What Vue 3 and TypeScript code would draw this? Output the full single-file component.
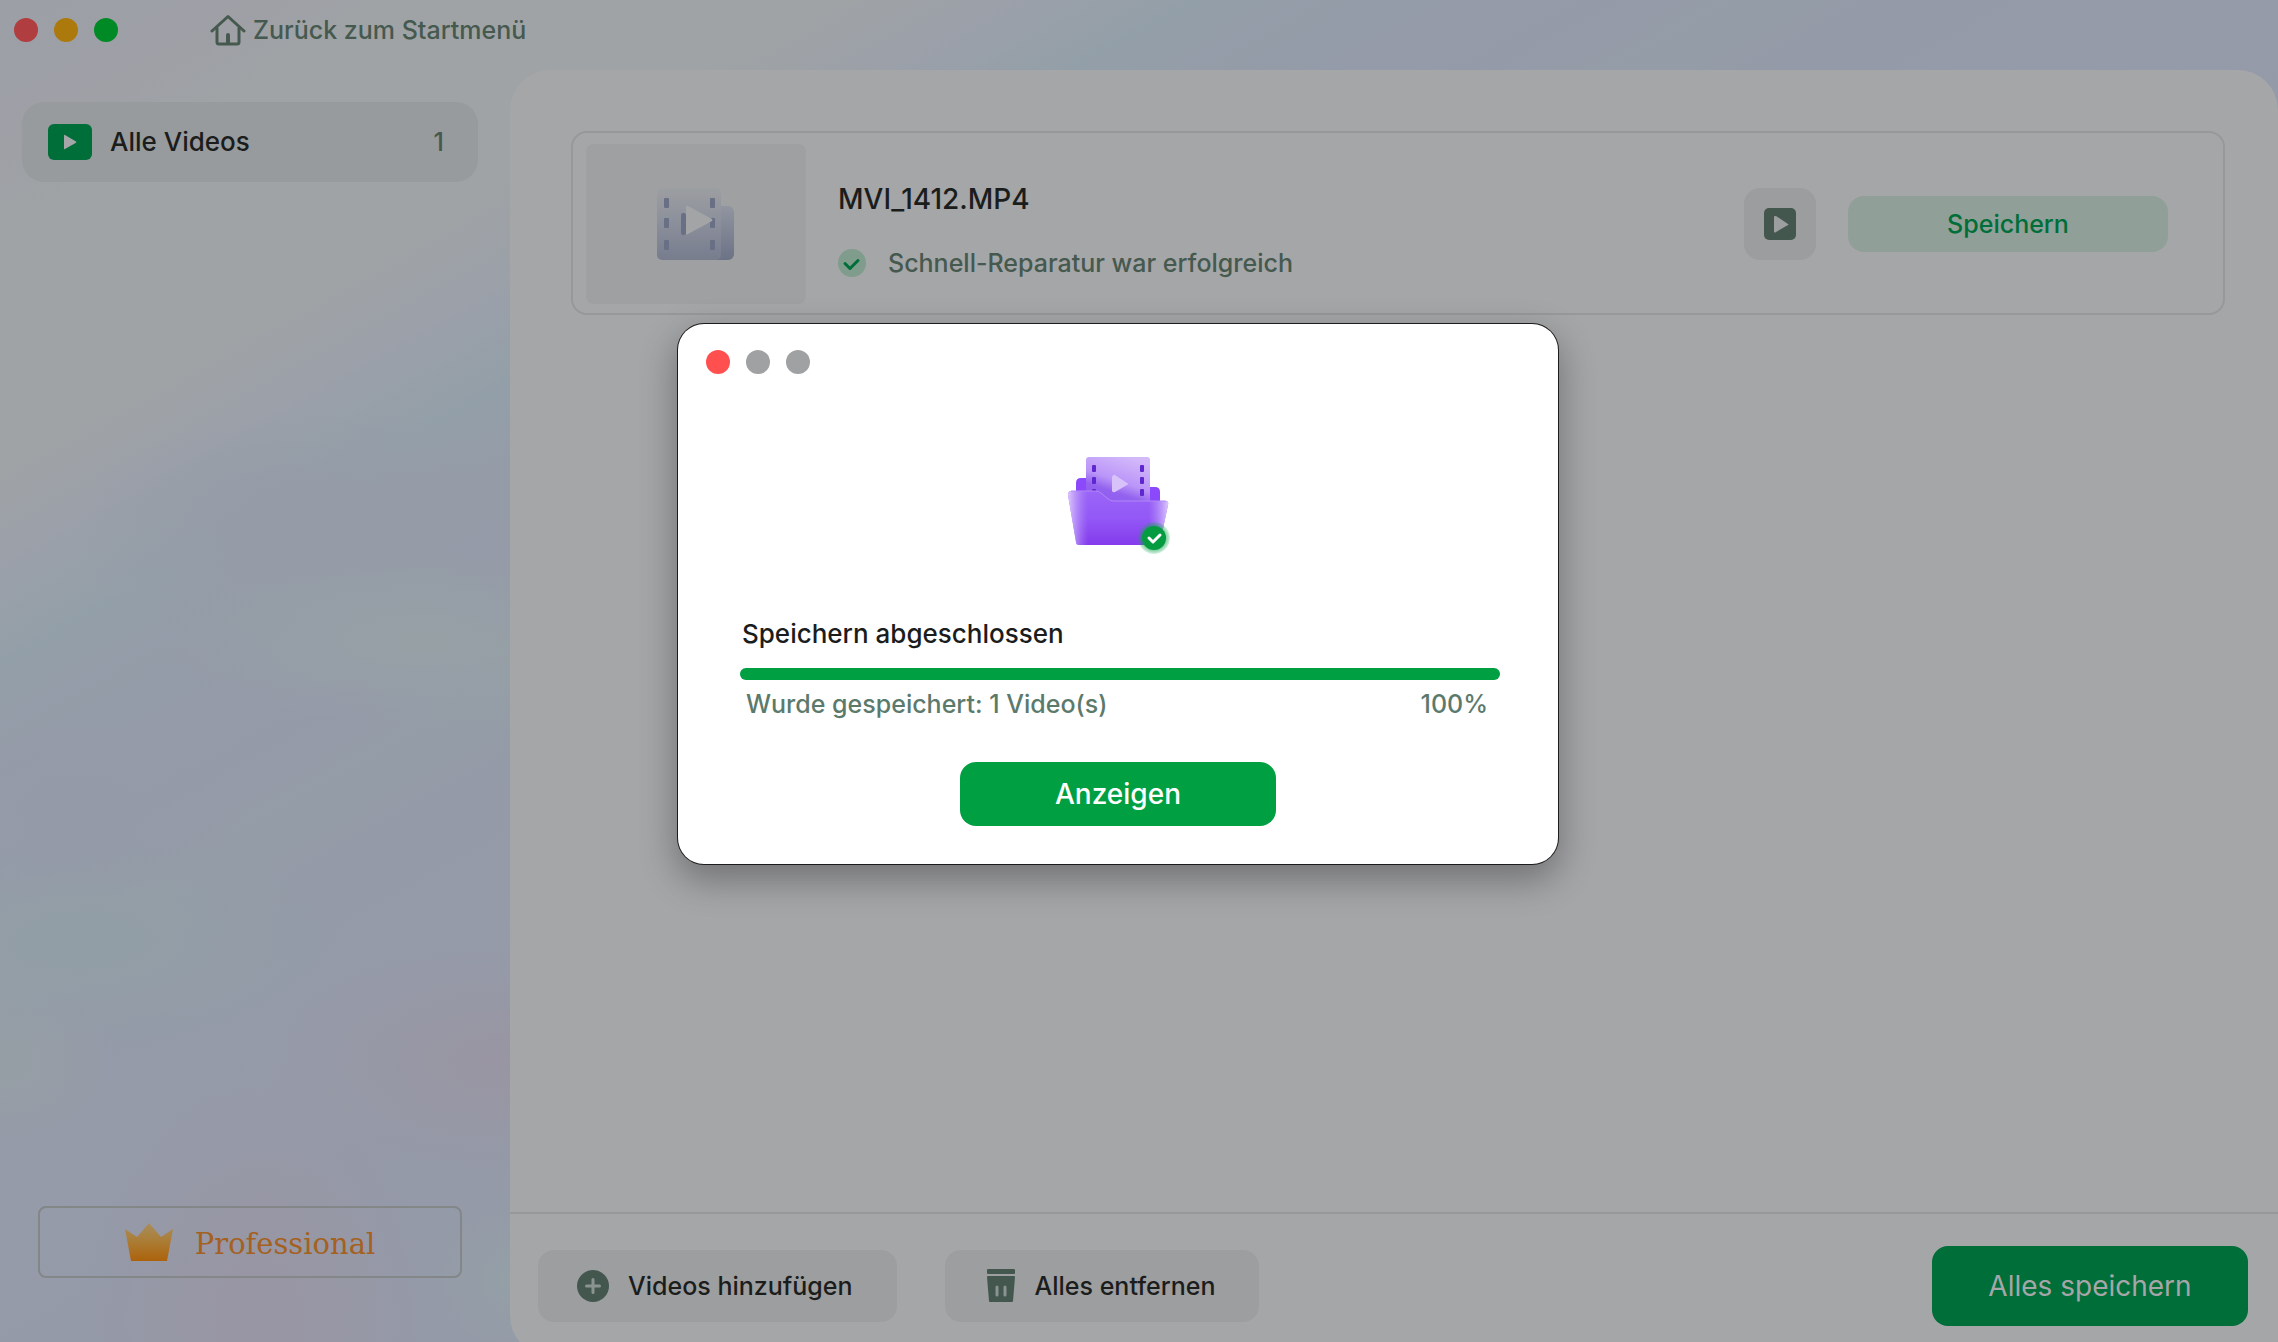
<script setup lang="ts">
import { computed, ref } from 'vue'

interface VideoFile {
  name: string
  status: string
}

const videos = ref<VideoFile[]>([
  { name: 'MVI_1412.MP4', status: 'Schnell-Reparatur war erfolgreich' },
])
const count = computed(() => videos.value.length)
const progress = ref(100)
</script>

<template>
  <div class="window">
    <header class="titlebar">
      <div class="lights">
        <button class="light red" aria-label="Schließen"></button>
        <button class="light amber" aria-label="Minimieren"></button>
        <button class="light green" aria-label="Vergrößern"></button>
      </div>
      <a class="home" href="#">
        <svg width="36" height="32" viewBox="0 0 36 32" fill="none" stroke="#46594f" stroke-width="3" stroke-linejoin="round" stroke-linecap="round">
          <path d="M2 17 18 2.500 34 17" />
          <path d="M7 14v14q0 2 2 2h18q2 0 2-2V14" />
          <path d="M18 21v8" stroke-width="4" />
        </svg>
        <span>Zurück zum Startmenü</span>
      </a>
    </header>

    <div class="body">
      <aside class="sidebar">
        <nav>
          <a class="category" href="#">
            <svg width="44" height="36" viewBox="0 0 44 36">
              <rect width="44" height="36" rx="6" fill="#006e38" />
              <path d="M16 11.500v13q0 1 1 .5l11-6.200q.8-.6 0-1.200l-11-6.600q-1-.5-1 .5z" fill="#a5a6a8" />
            </svg>
            <span class="category-name">Alle Videos</span>
            <span class="category-count">{{ count }}</span>
          </a>
        </nav>
        <button class="pro">
          <svg width="48" height="38" viewBox="0 0 48 38">
            <defs>
              <linearGradient id="crown" x1="0" y1="0" x2="0" y2="1">
                <stop offset="0" stop-color="#a88e5c" />
                <stop offset=".5" stop-color="#ab7c34" />
                <stop offset="1" stop-color="#ad620b" />
              </linearGradient>
            </defs>
            <path d="M0 6 12 14 24 0l12 14L48 6l-6 32H6z" fill="url(#crown)" />
          </svg>
          <span>Professional</span>
        </button>
      </aside>

      <main class="panel">
        <section class="files">
          <article v-for="video in videos" :key="video.name" class="file">
            <div class="thumb">
              <svg width="78" height="72" viewBox="0 0 78 72">
                <defs>
                  <linearGradient id="film" x1="0" y1="0" x2="0" y2="1">
                    <stop offset="0" stop-color="#9c9ea1" />
                    <stop offset=".5" stop-color="#8b8f9b" />
                    <stop offset="1" stop-color="#777d8e" />
                  </linearGradient>
                  <linearGradient id="filmback" x1="0" y1="0" x2="0" y2="1">
                    <stop offset="0" stop-color="#9195a0" />
                    <stop offset="1" stop-color="#6c7386" />
                  </linearGradient>
                </defs>
                <rect x="30" y="18" width="47" height="54" rx="6" fill="url(#filmback)" />
                <rect width="64" height="72" rx="5" fill="url(#film)" />
                <g fill="#697085">
                  <rect x="7" y="10" width="5" height="10" rx="1" />
                  <rect x="7" y="30" width="5" height="10" rx="1" />
                  <rect x="7" y="52" width="5" height="10" rx="1" />
                  <rect x="53" y="10" width="5" height="10" rx="1" />
                  <rect x="53" y="30" width="5" height="10" rx="1" />
                  <rect x="53" y="52" width="5" height="10" rx="1" />
                  <rect x="24" y="25" width="5" height="22" rx="2" />
                </g>
                <path d="M29 18v28q1 1 2 0l24-13q1-1 0-2L31 18q-1-1-2 0z" fill="#a3a4a6" />
              </svg>
            </div>
            <div class="info">
              <h2>{{ video.name }}</h2>
              <p>
                <svg width="28" height="28" viewBox="0 0 28 28">
                  <circle cx="14" cy="14" r="14" fill="#7f9c8d" />
                  <path d="M7 14.500l5 5 8-8" fill="none" stroke="#006e38" stroke-width="3" stroke-linecap="round" stroke-linejoin="round" />
                </svg>
                <span>{{ video.status }}</span>
              </p>
            </div>
            <button class="preview" aria-label="Vorschau">
              <svg width="32" height="32" viewBox="0 0 32 32">
                <rect width="32" height="32" rx="5" fill="#43574e" />
                <path d="M10 9v15q1 1 2 0l12-7q1-.5 0-1L12 8q-2-.5-2 1z" fill="#9c9e9f" />
              </svg>
            </button>
            <button class="save">Speichern</button>
          </article>
        </section>

        <footer class="actions">
          <button class="action">
            <svg width="34" height="34" viewBox="0 0 34 34">
              <circle cx="17" cy="17" r="16" fill="#43574e" />
              <path d="M17 10.500v13M10.500 17h13" stroke="#8b9391" stroke-width="3" stroke-linecap="round" />
            </svg>
            <span>Videos hinzufügen</span>
          </button>
          <button class="action remove">
            <svg width="28" height="34" viewBox="0 0 28 34" fill="#43574e">
              <rect width="28" height="5" rx="1" />
              <path d="M0 8q0-1 1-1h26q1 0 1 1l-2 24q0 1-1 1H3q-1 0-1-1z" />
              <path d="M10 18v8M18 18v8" stroke="#8b9391" stroke-width="3" stroke-linecap="round" />
            </svg>
            <span>Alles entfernen</span>
          </button>
          <button class="save-all">Alles speichern</button>
        </footer>
      </main>
    </div>

    <div class="overlay">
      <div class="dialog" role="dialog" aria-modal="true" aria-labelledby="dialog-title">
        <div class="lights">
          <button class="light bright" aria-label="Dialog schließen"></button>
          <button class="light grey" aria-label="Dialog minimieren" disabled></button>
          <button class="light grey" aria-label="Dialog vergrößern" disabled></button>
        </div>
        <svg class="folder" width="104" height="98" viewBox="-2 0 104 98">
          <defs>
            <linearGradient id="sheet" x1=".7" y1="0" x2=".3" y2="1">
              <stop offset="0" stop-color="#d3b9fa" />
              <stop offset=".45" stop-color="#ba95f8" />
              <stop offset=".65" stop-color="#9362ee" />
              <stop offset="1" stop-color="#8f58f4" />
            </linearGradient>
            <linearGradient id="front" x1="0" y1="0" x2="0" y2="1">
              <stop offset="0" stop-color="#9a65f7" />
              <stop offset=".5" stop-color="#9358f6" />
              <stop offset="1" stop-color="#843bec" />
            </linearGradient>
            <linearGradient id="sheen">
              <stop offset="0" stop-color="#dcc8fc" />
              <stop offset=".2" stop-color="#b48cf8" stop-opacity="0" />
              <stop offset=".8" stop-color="#b48cf8" stop-opacity="0" />
              <stop offset="1" stop-color="#dcc8fc" />
            </linearGradient>
            <radialGradient id="halo">
              <stop offset=".7" stop-color="#0ba34b" stop-opacity=".6" />
              <stop offset="1" stop-color="#0ba34b" stop-opacity=".15" />
            </radialGradient>
          </defs>
          <path d="M8 50V26q0-5 5-5h20l10 9h44q5 0 5 5v15z" fill="#8b49fb" />
          <rect x="18" width="64" height="54" rx="3" fill="url(#sheet)" />
          <g fill="#5f27cf">
            <rect x="24" y="8" width="4" height="7" rx="1" />
            <rect x="24" y="20" width="4" height="7" rx="1" />
            <rect x="24" y="32" width="4" height="4" rx="1" />
            <rect x="72" y="8" width="4" height="7" rx="1" />
            <rect x="72" y="20" width="4" height="7" rx="1" />
            <rect x="72" y="32" width="4" height="7" rx="1" />
          </g>
          <path d="M44 20v14q1 2 3 1l12-7q2-1 0-2L47 18q-2-1-3 2z" fill="#d8c2fa" />
          <path d="M0 38q0-4 3-4h24q4 0 6 2l6 5q3 3 7 3h52q3 0 2 4l-8 38q-1 2-3 2H11q-3 0-3-3z" fill="url(#front)" />
          <path d="M0 38q0-4 3-4h24q4 0 6 2l6 5q3 3 7 3h52q3 0 2 4l-8 38q-1 2-3 2H11q-3 0-3-3z" fill="url(#sheen)" />
          <path d="M3 34h24q4 0 6 2l6 5q3 3 7 3h52" fill="none" stroke="#b088f7" stroke-width="1" />
          <circle cx="86" cy="81" r="16" fill="url(#halo)" />
          <circle cx="86" cy="81" r="12" fill="#059b40" />
          <path d="M81 81l4 4 7-7" fill="none" stroke="#fff" stroke-width="3" stroke-linecap="round" stroke-linejoin="round" />
        </svg>
        <h1 id="dialog-title">Speichern abgeschlossen</h1>
        <div class="track" role="progressbar" :aria-valuenow="progress" aria-valuemin="0" aria-valuemax="100">
          <div class="bar" :style="{ width: progress + '%' }"></div>
        </div>
        <div class="summary">
          <span>Wurde gespeichert: {{ count }} Video(s)</span>
          <span>{{ progress }}%</span>
        </div>
        <button class="show">Anzeigen</button>
      </div>
    </div>
  </div>
</template>

<style>
body {
  margin: 0;
}
</style>

<style scoped>
.window {
  box-sizing: border-box;
  min-height: 100vh;
  display: flex;
  flex-direction: column;
  position: relative;
  overflow: hidden;
  font-family: Inter, "Liberation Sans", sans-serif;
  font-size: 25px;
  font-weight: 500;
  line-height: 32px;
  color: #1b1d1c;
  background:
    radial-gradient(ellipse 90px 90px at 510px 1280px, #949fa6 0%, #949fa600 100%),
    radial-gradient(ellipse 260px 90px at 420px 640px, #96a1a5 0%, #96a1a500 100%),
    radial-gradient(ellipse 260px 120px at 330px 530px, #959ba7 20%, #959ba700 100%),
    radial-gradient(ellipse 160px 90px at 80px 810px, #949aa7 20%, #949aa700 100%),
    radial-gradient(ellipse 260px 110px at 80px 940px, #929ea6 20%, #929ea600 100%),
    radial-gradient(ellipse 120px 90px at 0 1060px, #969ea5 20%, #969ea500 100%),
    radial-gradient(ellipse 240px 120px at 500px 1060px, #9995a2 0%, #9995a200 100%),
    radial-gradient(ellipse 180px 260px at 260px 1320px, #9896a4 20%, #9896a400 100%),
    linear-gradient(151deg, #9d9fa7 0, #9ea0a6 140px, #9fa3a5 200px, #9fa3a5 400px, #9ba0a9 490px, #939fa8 580px, #949ca8 650px, #959aa9 780px, #949da7 850px, #949aa8 940px, #959ba9 1080px, #949aa8 1200px, #949ba8 2279px);
}
button {
  border: 0;
  padding: 0;
  font: inherit;
  color: inherit;
  background: none;
  cursor: pointer;
}
a {
  color: inherit;
  text-decoration: none;
}
svg {
  display: block;
  flex: none;
}
h1,
h2,
p {
  margin: 0;
}
h1,
h2 {
  line-height: 36px;
  font-weight: 500;
}
h1 {
  font-size: 26px;
}
h2 {
  font-size: 28px;
}
.titlebar {
  height: 70px;
  box-sizing: border-box;
  padding: 14px;
  display: flex;
  align-items: flex-start;
  gap: 92px;
}
.lights {
  display: flex;
  gap: 16px;
}
.light {
  width: 24px;
  height: 24px;
  border-radius: 50%;
}
.titlebar .lights {
  padding-top: 4px;
}
.red { background: #b03d3f; }
.amber { background: #ac7a0c; }
.green { background: #008a26; }
.bright { background: #ff4f4f; }
.grey { background: #9fa1a2; }
.home {
  display: flex;
  align-items: center;
  gap: 7px;
  color: #46594f;
}
.body {
  flex: 1;
  display: flex;
}
.sidebar {
  width: 510px;
  flex: none;
  box-sizing: border-box;
  padding: 32px 32px 64px 22px;
  display: flex;
  flex-direction: column;
  justify-content: space-between;
}
.category {
  display: flex;
  align-items: center;
  height: 80px;
  box-sizing: border-box;
  padding: 0 34px 0 26px;
  border-radius: 22px;
  background: #979b9d;
}
.category-name {
  flex: 1;
  padding-left: 18px;
  font-size: 26px;
}
.category-count {
  color: #46594f;
}
.pro {
  display: flex;
  align-items: center;
  justify-content: center;
  gap: 22px;
  height: 72px;
  margin: 0 16px;
  box-sizing: border-box;
  border: 2px solid #838788;
  border-radius: 8px;
  font-family: "DejaVu Serif", serif;
  font-size: 29px;
  font-weight: 400;
  color: #a4611f;
}
.pro span {
  padding-top: 4px;
}
.panel {
  flex: 1;
  min-width: 0;
  display: flex;
  flex-direction: column;
  margin-bottom: -14px;
  border-radius: 40px 40px 0 40px;
  background: #a5a6a8;
}
.files {
  flex: 1;
  padding: 61px 53px 32px 61px;
}
.file {
  display: flex;
  align-items: center;
  height: 184px;
  box-sizing: border-box;
  padding: 2px 55px 0 13px;
  border: 2px solid #97989a;
  border-radius: 16px;
}
.thumb {
  width: 220px;
  height: 160px;
  display: flex;
  align-items: center;
  justify-content: center;
  border-radius: 8px;
  background: #9fa0a2;
}
.info {
  flex: 1;
  display: flex;
  flex-direction: column;
  gap: 30px;
  padding: 12px 0 0 32px;
}
.info p {
  display: flex;
  align-items: center;
  gap: 22px;
  color: #46594f;
}
.preview {
  width: 72px;
  height: 72px;
  display: flex;
  align-items: center;
  justify-content: center;
  margin-right: 32px;
  border-radius: 16px;
  background: #9c9d9f;
}
.save {
  width: 320px;
  height: 56px;
  border-radius: 16px;
  background: #909f98;
  color: #006e38;
}
.actions {
  display: flex;
  align-items: center;
  gap: 48px;
  height: 144px;
  box-sizing: border-box;
  padding: 16px 30px 14px 28px;
  border-top: 2px solid #97989a;
}
.action {
  display: flex;
  align-items: center;
  gap: 18px;
  height: 72px;
  padding: 0 44px 0 38px;
  border-radius: 16px;
  background: #9d9ea0;
}
.remove {
  gap: 20px;
  padding-left: 42px;
}
.save-all {
  width: 316px;
  height: 80px;
  margin-left: auto;
  border-radius: 16px;
  background: #006e38;
  color: #a5a6a8;
  font-size: 28px;
  font-weight: 400;
}
.overlay {
  position: absolute;
  inset: 0;
  display: flex;
  align-items: center;
  justify-content: center;
  padding: 0 42px 154px 0;
}
.dialog {
  width: 880px;
  box-sizing: border-box;
  padding: 26px 28px 38px;
  display: flex;
  flex-direction: column;
  border-radius: 26px;
  background: #fff;
  box-shadow: 0 0 0 1px #1c1c1c, 0 14px 36px 2px #00000050;
}
.folder {
  margin: 83px auto 61px;
}
.dialog h1 {
  padding-left: 36px;
}
.track {
  height: 12px;
  margin: 16px 30px 0 34px;
  border-radius: 6px;
  background: #d9efe2;
}
.bar {
  height: 100%;
  border-radius: 6px;
  background: #009f42;
}
.summary {
  display: flex;
  justify-content: space-between;
  padding: 8px 42px 42px 40px;
  color: #5c7a6c;
}
.show {
  width: 316px;
  height: 64px;
  align-self: center;
  border-radius: 16px;
  background: #009f42;
  color: #fff;
  font-size: 28px;
}
</style>
